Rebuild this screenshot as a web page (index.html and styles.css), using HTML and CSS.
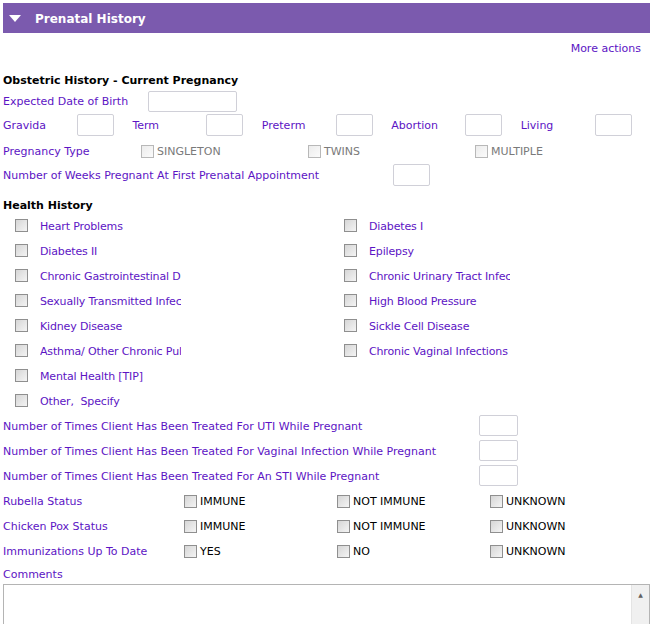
FILE: index.html
```html
<!DOCTYPE html>
<html lang="en">
<head>
  <meta charset="UTF-8" />
  <title>Prenatal History</title>
  <link rel="stylesheet" href="styles.css">
</head>
<body>
  <div class="panel-head">
    <span class="caret"></span>
    <span class="panel-title">Prenatal History</span>
  </div>
  <div class="actions"><a href="#">More actions</a></div>

  <div class="sect-title">Obstetric History - Current Pregnancy</div>
  <div class="row edb">
    <span class="lbl">Expected Date of Birth</span>
    <input type="text" class="txt wide">
  </div>
  <div class="row counts">
    <div class="cell"><span class="lbl">Gravida</span><input type="text" class="txt"></div>
    <div class="cell"><span class="lbl">Term</span><input type="text" class="txt"></div>
    <div class="cell"><span class="lbl">Preterm</span><input type="text" class="txt"></div>
    <div class="cell"><span class="lbl">Abortion</span><input type="text" class="txt"></div>
    <div class="cell"><span class="lbl">Living</span><input type="text" class="txt"></div>
  </div>
  <div class="row ptype">
    <span class="lbl">Pregnancy Type</span>
    <label class="opt off"><input type="checkbox" disabled>SINGLETON</label>
    <label class="opt off"><input type="checkbox" disabled>TWINS</label>
    <label class="opt off"><input type="checkbox" disabled>MULTIPLE</label>
  </div>
  <div class="row weeks">
    <span class="lbl">Number of Weeks Pregnant At First Prenatal Appointment</span>
    <input type="text" class="txt">
  </div>

  <div class="sect-title health">Health History</div>
  <div class="checks">
    <label class="chk"><input type="checkbox"><span>Heart Problems</span></label>
    <label class="chk"><input type="checkbox"><span>Diabetes I</span></label>
    <label class="chk"><input type="checkbox"><span>Diabetes II</span></label>
    <label class="chk"><input type="checkbox"><span>Epilepsy</span></label>
    <label class="chk"><input type="checkbox"><span>Chronic Gastrointestinal Disease</span></label>
    <label class="chk"><input type="checkbox"><span>Chronic Urinary Tract Infections</span></label>
    <label class="chk"><input type="checkbox"><span>Sexually Transmitted Infections</span></label>
    <label class="chk"><input type="checkbox"><span>High Blood Pressure</span></label>
    <label class="chk"><input type="checkbox"><span>Kidney Disease</span></label>
    <label class="chk"><input type="checkbox"><span>Sickle Cell Disease</span></label>
    <label class="chk"><input type="checkbox"><span>Asthma/ Other Chronic Pulmonary Disease</span></label>
    <label class="chk"><input type="checkbox"><span>Chronic Vaginal Infections</span></label>
    <label class="chk"><input type="checkbox"><span>Mental Health [TIP]</span></label>
    <label class="chk"></label>
    <label class="chk"><input type="checkbox"><span>Other,&nbsp; Specify</span></label>
  </div>

  <div class="row times">
    <span class="lbl">Number of Times Client Has Been Treated For UTI While Pregnant</span>
    <input type="text" class="txt">
  </div>
  <div class="row times">
    <span class="lbl">Number of Times Client Has Been Treated For Vaginal Infection While Pregnant</span>
    <input type="text" class="txt">
  </div>
  <div class="row times">
    <span class="lbl">Number of Times Client Has Been Treated For An STI While Pregnant</span>
    <input type="text" class="txt">
  </div>

  <div class="row status">
    <span class="lbl">Rubella Status</span>
    <label class="opt"><input type="checkbox">IMMUNE</label>
    <label class="opt"><input type="checkbox">NOT IMMUNE</label>
    <label class="opt"><input type="checkbox">UNKNOWN</label>
  </div>
  <div class="row status">
    <span class="lbl">Chicken Pox Status</span>
    <label class="opt"><input type="checkbox">IMMUNE</label>
    <label class="opt"><input type="checkbox">NOT IMMUNE</label>
    <label class="opt"><input type="checkbox">UNKNOWN</label>
  </div>
  <div class="row status">
    <span class="lbl">Immunizations Up To Date</span>
    <label class="opt"><input type="checkbox">YES</label>
    <label class="opt"><input type="checkbox">NO</label>
    <label class="opt"><input type="checkbox">UNKNOWN</label>
  </div>

  <div class="row comments-lbl"><span class="lbl">Comments</span></div>
  <div class="comments">
    <div class="comments-area"></div>
    <div class="scroll"><span class="up">&#9650;</span></div>
  </div>
</body>
</html>
```

FILE: styles.css
```css
body { margin: 3px 4px 0 3px; font-family: "DejaVu Sans", Tahoma, sans-serif; font-size: 11px; color: #000; background: #fff; overflow: hidden; }
.panel-head { background: #7b5aae; height: 30px; display: flex; align-items: center; padding-left: 6px; }
.caret { width: 0; height: 0; border-left: 6px solid transparent; border-right: 6px solid transparent; border-top: 7px solid #fff; margin-right: 14px; }
.panel-title { color: #fff; font-weight: bold; font-size: 12px; padding-top: 1px; }
.actions { height: 20px; margin-top: 5px; display: flex; align-items: center; justify-content: flex-end; padding-right: 9px; }
.actions a { color: #5c14c4; text-decoration: none; }

.sect-title { font-weight: bold; height: 20px; line-height: 22px; margin-top: 12px; }
.sect-title.health { margin-top: 6px; line-height: 25px; }

.lbl { color: #5c14c4; white-space: nowrap; padding-top: 1px; }
.row { display: flex; align-items: center; height: 25px; }
.txt { box-sizing: border-box; width: 37px; height: 22px; border: 1px solid #d0d0d8; border-radius: 2px; margin: 0; padding: 0; background: #fff; }
.txt.wide { width: 89px; height: 21px; }

.edb { height: 22px; }
.edb .lbl { width: 145px; }

.counts .cell { width: 130px; display: flex; align-items: center; }
.counts .lbl { width: 74px; }

.ptype { padding-top: 2px; height: 23px; }
.ptype .lbl { width: 138px; }
.opt { display: flex; align-items: center; width: 167px; color: #000; text-transform: uppercase; padding-top: 1px; }
.opt.off { color: #7a7a7a; }
.opt input { appearance: none; -webkit-appearance: none; box-sizing: border-box; width: 13px; height: 13px; margin: 0 3px 0 0; border: 1px solid #8f8f8f; background: linear-gradient(135deg, #d6d6d6, #f4f4f4); }
.opt.off input { border-color: #b8b8b8; background: linear-gradient(135deg, #ececec, #fbfbfb); }

.weeks .lbl { width: 390px; }

.checks { display: grid; grid-template-columns: 329px 1fr; }
.chk { display: flex; align-items: center; height: 25px; padding-left: 12px; }
.chk input { appearance: none; -webkit-appearance: none; box-sizing: border-box; width: 13px; height: 13px; margin: 0 12px 0 0; border: 1px solid #8f8f8f; background: linear-gradient(135deg, #d6d6d6, #f4f4f4); }
.chk span { color: #5c14c4; width: 141px; overflow: hidden; white-space: nowrap; letter-spacing: -0.15px; padding-top: 1px; }

.times .lbl { width: 476px; }
.times .txt { width: 39px; height: 21px; }

.status .lbl { width: 181px; }
.status .opt { width: 153px; }

.comments-lbl { height: 21px; }
.comments { display: flex; height: 60px; border: 1px solid #b4b4b4; border-bottom: none; }
.comments-area { flex: 1; }
.scroll { width: 17px; background: #f0f0f0; border-left: 1px solid #e4e4e4; display: flex; justify-content: center; }
.up { font-size: 6px; color: #606060; margin-top: 6px; }
```
